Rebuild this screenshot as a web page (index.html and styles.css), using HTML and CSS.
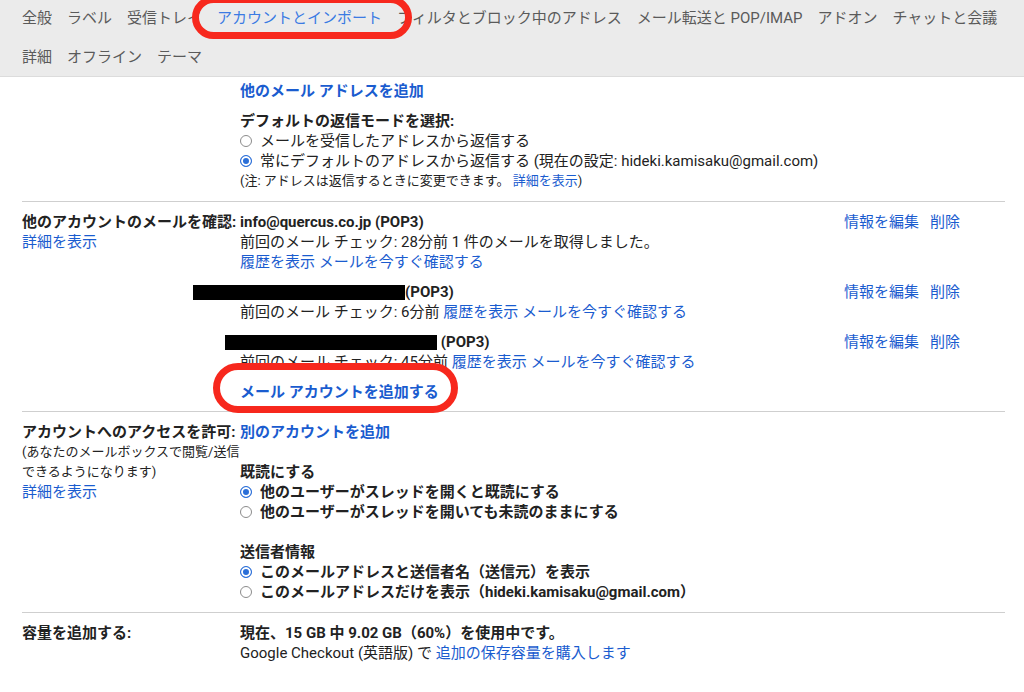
FILE: index.html
```html
<!DOCTYPE HTML>
<html>
	<head>
		<meta charset="utf-8">
		<title>設定 - アカウントとインポート</title>
		<link rel="stylesheet" href="styles.css">
	</head>
	<body>
		<!-- Tabs -->
		<div class="tabs">
			<span class="tab">全般</span>
			<span class="tab">ラベル</span>
			<span class="tab">受信トレイ</span>
			<span class="tab active">アカウントとインポート</span>
			<span class="tab">フィルタとブロック中のアドレス</span>
			<span class="tab">メール転送と POP/IMAP</span>
			<span class="tab">アドオン</span>
			<span class="tab">チャットと会議</span>
			<span class="tab">詳細</span>
			<span class="tab">オフライン</span>
			<span class="tab">テーマ</span>
		</div>

		<!-- Settings -->
		<div class="settings">
			<div class="row first">
				<div class="label"></div>
				<div class="value">
					<a class="link strong">他のメール アドレスを追加</a>
					<div class="head gap10">デフォルトの返信モードを選択:</div>
					<div><span class="radio"></span>メールを受信したアドレスから返信する</div>
					<div><span class="radio on"></span>常にデフォルトのアドレスから返信する (現在の設定: hideki.kamisaku@gmail.com)</div>
					<div class="small">(注: アドレスは返信するときに変更できます。 <a class="link">詳細を表示</a>)</div>
				</div>
			</div>

			<div class="row accounts">
				<div class="label">
					<div class="head">他のアカウントのメールを確認:</div>
					<a class="link">詳細を表示</a>
				</div>
				<div class="value">
					<div class="account">
						<div>
							<div class="head">info@quercus.co.jp (POP3)</div>
							<div>前回のメール チェック: 28分前 1 件のメールを取得しました。</div>
							<div><a class="link">履歴を表示</a> <a class="link">メールを今すぐ確認する</a></div>
						</div>
						<div class="actions"><a class="link">情報を編集</a><a class="link">削除</a></div>
					</div>
					<div class="account">
						<div>
							<div class="head"><span class="redact r2"></span>(POP3)</div>
							<div>前回のメール チェック: 6分前 <a class="link">履歴を表示</a> <a class="link">メールを今すぐ確認する</a></div>
						</div>
						<div class="actions"><a class="link">情報を編集</a><a class="link">削除</a></div>
					</div>
					<div class="account">
						<div>
							<div class="head"><span class="redact r3"></span> (POP3)</div>
							<div>前回のメール チェック: 45分前 <a class="link">履歴を表示</a> <a class="link">メールを今すぐ確認する</a></div>
						</div>
						<div class="actions"><a class="link">情報を編集</a><a class="link">削除</a></div>
					</div>
					<a class="link strong">メール アカウントを追加する</a>
				</div>
			</div>

			<div class="row">
				<div class="label">
					<div class="head">アカウントへのアクセスを許可:</div>
					<div class="small">(あなたのメールボックスで閲覧/送信<br>できるようになります)</div>
					<a class="link">詳細を表示</a>
				</div>
				<div class="value">
					<a class="link strong">別のアカウントを追加</a>
					<div class="head gap20">既読にする</div>
					<div class="head"><span class="radio on"></span>他のユーザーがスレッドを開くと既読にする</div>
					<div class="head"><span class="radio"></span>他のユーザーがスレッドを開いても未読のままにする</div>
					<div class="head gap20">送信者情報</div>
					<div class="head"><span class="radio on"></span>このメールアドレスと送信者名（送信元）を表示</div>
					<div class="head"><span class="radio"></span>このメールアドレスだけを表示（hideki.kamisaku@gmail.com）</div>
				</div>
			</div>

			<div class="row">
				<div class="label">
					<div class="head">容量を追加する:</div>
				</div>
				<div class="value">
					<div class="head">現在、15 GB 中 9.02 GB（60%）を使用中です。</div>
					<div>Google Checkout (英語版) で <a class="link">追加の保存容量を購入します</a></div>
				</div>
			</div>
		</div>

		<!-- red marks drawn over the screenshot -->
		<div class="mark mark-tab"></div>
		<div class="mark mark-add"></div>
	</body>
</html>
```

FILE: styles.css
```css
html, body{
	margin: 0;
	background: #fff;
}
body{
	font-family: Roboto, "Noto Sans CJK JP", sans-serif;
	font-size: 15px;
	line-height: 20px;
	color: #222;
}
.tabs{
	display: flex;
	flex-wrap: wrap;
	align-content: flex-start;
	column-gap: 15px;
	row-gap: 5px;
	height: 77px;
	padding: 1px 0 0 22px;
	box-sizing: border-box;
	background: #ebebeb;
	border-bottom: 1px solid #dcdcdc;
}
.tab{
	font-size: 15px;
	line-height: 34px;
	color: #5a5a5a;
	white-space: nowrap;
}
.tab.active{
	color: #3b7be3;
}
.settings{
	margin: 0 19px 0 22px;
}
.row{
	display: grid;
	grid-template-columns: 218px 1fr;
	padding: 10px 0;
	border-top: 1px solid #cfcfcf;
}
.row.first{
	padding-top: 4px;
	border-top: none;
}
.row.accounts{
	padding-bottom: 9px;
}
.link{
	color: #1a5ccf;
	cursor: pointer;
}
.link.strong{
	font-weight: bold;
	display: block;
}
.head{
	font-weight: bold;
	white-space: nowrap;
}
.gap10{ margin-top: 10px; }
.gap20{ margin-top: 20px; }
.small{
	font-size: 13px;
}
.label .link{
	display: block;
}
.radio{
	display: inline-block;
	width: 12px;
	height: 12px;
	margin-right: 8px;
	border: 1px solid #8c8c8c;
	border-radius: 50%;
	box-sizing: border-box;
	background: #fff;
	vertical-align: -1px;
}
.radio.on{
	border-color: #2b6fd8;
	background: #2b6fd8;
	box-shadow: inset 0 0 0 2px #fff;
}
.account{
	display: grid;
	grid-template-columns: 1fr 161px;
	margin-bottom: 10px;
}
.actions{
	display: flex;
	gap: 11px;
	align-items: flex-start;
}
.redact{
	display: inline-block;
	height: 15px;
	background: #000;
	vertical-align: -3px;
}
.redact.r2{
	width: 212px;
	margin-left: -47px;
}
.redact.r3{
	width: 212px;
	margin-left: -15px;
}
.mark{
	position: absolute;
	border: 7px solid #f7281d;
	box-sizing: border-box;
}
.mark-tab{
	left: 192px;
	top: -4px;
	width: 220px;
	height: 43px;
	border-radius: 22px;
}
.mark-add{
	left: 213px;
	top: 363px;
	width: 245px;
	height: 50px;
	border-radius: 25px;
}
```
